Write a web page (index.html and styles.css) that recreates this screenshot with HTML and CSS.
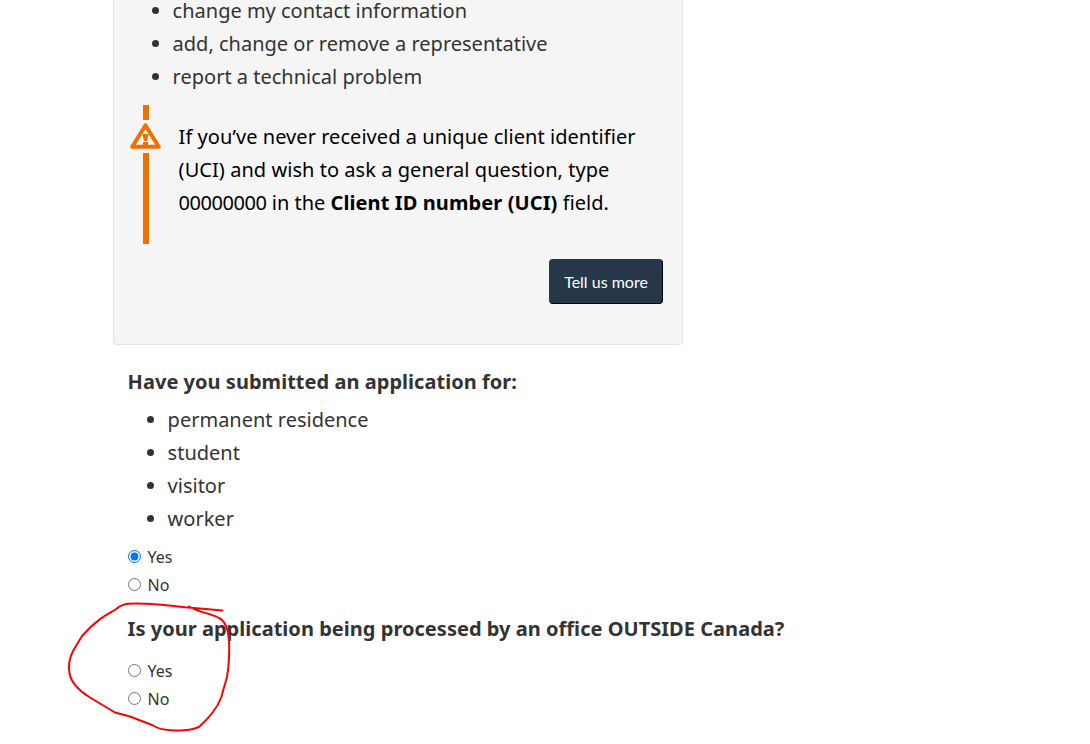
FILE: index.html
```
<!DOCTYPE html>
<html lang="en">
<head>
	<meta charset="utf-8">
	<meta name="viewport" content="width=device-width, initial-scale=1">
	<title>Web form</title>
	<link rel="stylesheet" href="styles.css">
</head>
<body>
	<main class="container">
		<section class="well">
			<ul class="list">
				<li>change my contact information</li>
				<li>add, change or remove a representative</li>
				<li>report a technical problem</li>
			</ul>

			<div class="alert">
				<div class="alert-bar">
					<span class="bar-top"></span>
					<svg class="alert-icon" width="32" height="27" viewBox="0 0 32 27">
						<path d="M15.500 2.500 L28.800 23.800 H2.200 Z" fill="none" stroke="#ee7100" stroke-width="4" stroke-linejoin="round"/>
						<path d="M14.300 0.800 Q15.500 -0.300 16.700 0.800 L19 5 H12 Z" fill="#ee7100"/>
						<path d="M12.500 11 H18.500 L17.200 18 H13.800 Z" fill="#ee7100"/>
						<rect x="13" y="19" width="5" height="4" fill="#ee7100"/>
					</svg>
					<span class="bar-bottom"></span>
				</div>
				<p><span class="wide">If you’ve never received a unique client identifier</span><br><span class="wide">(UCI) and wish to ask a general question, type</span><br><span class="digits">00000000</span> in the <strong>Client ID number (UCI)</strong> field.</p>
			</div>

			<div class="actions">
				<button type="button" class="btn">Tell us more</button>
			</div>
		</section>

		<form class="questions">
			<h2>Have you submitted an application for:</h2>
			<ul class="list">
				<li>permanent residence</li>
				<li>student</li>
				<li>visitor</li>
				<li>worker</li>
			</ul>
			<div class="choices">
				<label><input type="radio" name="submitted" checked>Yes</label>
				<label><input type="radio" name="submitted">No</label>
			</div>

			<h2 class="second">Is your application being processed by an office OUTSIDE Canada?</h2>
			<div class="choices">
				<label><input type="radio" name="outside">Yes</label>
				<label><input type="radio" name="outside">No</label>
			</div>
		</form>
	</main>

	<!-- hand drawn circle over the last question -->
	<svg class="scribble" width="190" height="150" viewBox="60 590 190 150">
		<path d="M222.500 610.5 L200 608.5 L185 607.3 C168 605 150 603.5 135 603.5 C125 603.5 120 605 115 610 C106 615 96 620 82 636 L73 651 C69 659 68 665 69.500 673 C71 683 78 690 90 697.500 L115 712.500 L130 716.500 L152 725 C158 728.500 162 730 175 730.500 C190 730.500 194 729 199 727 C210 717 218 706 221 698 L227 677 C229 665 229.500 650 229 640 C228 627 225 621 219 618 C210 613 200 613 189 606.500"/>
	</svg>
</body>
</html>
```

FILE: styles.css
```
* {
	box-sizing: border-box;
}

body {
	margin: 0;
	height: 744px;
	position: relative;
	background: #fff;
	color: #333;
	font-family: "Noto Sans", sans-serif;
	font-size: 20px;
	line-height: 33px;
}

.container {
	width: 860px;
	margin-left: 113px;
}

/* grey box */
.well {
	width: 570px;
	height: 345px;
	padding: 0 19px 0 15px;
	background: #f5f5f5;
	border: 1px solid #e3e3e3;
	border-top: 0;
	border-radius: 0 0 4px 4px;
}

.list {
	margin: 0;
	padding-left: 39.6px;
}

.well .list {
	padding-left: 43.6px;
}

.well .list li:first-child {
	line-height: 21px;
	margin-bottom: 6px;
}

.alert {
	display: flex;
	height: 139px;
	margin-top: 12px;
	color: #000;
}

.alert-bar {
	display: flex;
	flex-direction: column;
	align-items: center;
	width: 34px;
	margin-right: 15.6px;
}

.bar-top {
	width: 6px;
	height: 15px;
	background: #ee7100;
}

.alert-icon {
	margin: 3px 0;
}

.bar-bottom {
	width: 6px;
	flex: 1;
	background: #ee7100;
}

.alert p {
	margin: 0;
	padding-top: 15px;
	white-space: nowrap;
}

.wide {
	letter-spacing: 0.05px;
}

.digits {
	letter-spacing: -0.45px;
}

.alert strong {
	letter-spacing: 0.1px;
}

.actions {
	display: flex;
	justify-content: flex-end;
	margin-top: 15px;
}

.btn {
	width: 114px;
	height: 45px;
	padding: 0 0 1px;
	background: #26374a;
	color: #fff;
	border: 1px solid #26374a;
	border-right-color: #000;
	border-bottom-color: #000;
	border-radius: 4px;
	font-family: Lato, sans-serif;
	font-size: 16px;
}

/* questions */
.questions {
	padding: 20px 0 0 15px;
}

h2 {
	margin: 0 0 5px -0.4px;
	font-size: 20px;
	font-weight: 700;
	line-height: 33px;
	letter-spacing: 0.03px;
}

h2.second {
	margin: 13px 0 12px -0.4px;
}

.choices {
	display: flex;
	flex-direction: column;
	padding-top: 8px;
}

h2.second + .choices {
	padding-top: 0;
}

.choices label {
	display: flex;
	align-items: center;
	height: 28px;
	font-size: 16px;
}

.choices input {
	margin: 0 6.6px 2px 0;
}

.scribble {
	position: absolute;
	left: 60px;
	top: 590px;
	fill: none;
	stroke: #f00;
	stroke-width: 2;
	stroke-linecap: round;
	stroke-linejoin: round;
}
```
